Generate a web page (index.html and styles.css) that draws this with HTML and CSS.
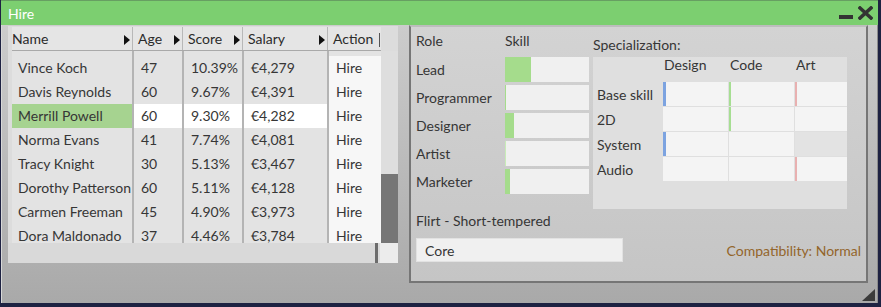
FILE: index.html
```html
<!DOCTYPE html>
<html>
<head>
  <meta charset="UTF-8">
  <title>Hire</title>
  <link rel="stylesheet" href="styles.css">
</head>
<body>
  <div class="window">
    <header class="titlebar">
      <span class="title">Hire</span>
      <div class="win-btns">
        <span class="btn-min"></span>
        <svg class="btn-close" width="15" height="14" viewBox="0 0 15 14">
          <path d="M2 2 L13 12 M13 2 L2 12" stroke="#333" stroke-width="3.6" stroke-linecap="square"/>
        </svg>
      </div>
    </header>

    <div class="win-body">
      <!-- Candidate list -->
      <div class="list">
        <div class="list-main">
          <div class="table">
            <div class="thead">
              <div class="th th-name">Name<span class="sort"></span></div>
              <div class="th">Age<span class="sort"></span></div>
              <div class="th">Score<span class="sort"></span></div>
              <div class="th">Salary<span class="sort"></span></div>
              <div class="th th-last">Action<span class="pipe"></span></div>
            </div>
            <div class="tbody">
              <div class="row spacer">
                <div class="cell"></div><div class="cell"></div><div class="cell"></div><div class="cell"></div><div class="cell act"></div>
              </div>
              <div class="row">
                <div class="cell name">Vince Koch</div><div class="cell">47</div><div class="cell">10.39%</div><div class="cell">€4,279</div><div class="cell act">Hire</div>
              </div>
              <div class="row">
                <div class="cell name">Davis Reynolds</div><div class="cell">60</div><div class="cell">9.67%</div><div class="cell">€4,391</div><div class="cell act">Hire</div>
              </div>
              <div class="row sel">
                <div class="cell name">Merrill Powell</div><div class="cell">60</div><div class="cell">9.30%</div><div class="cell">€4,282</div><div class="cell act">Hire</div>
              </div>
              <div class="row">
                <div class="cell name">Norma Evans</div><div class="cell">41</div><div class="cell">7.74%</div><div class="cell">€4,081</div><div class="cell act">Hire</div>
              </div>
              <div class="row">
                <div class="cell name">Tracy Knight</div><div class="cell">30</div><div class="cell">5.13%</div><div class="cell">€3,467</div><div class="cell act">Hire</div>
              </div>
              <div class="row">
                <div class="cell name">Dorothy Patterson</div><div class="cell">60</div><div class="cell">5.11%</div><div class="cell">€4,128</div><div class="cell act">Hire</div>
              </div>
              <div class="row">
                <div class="cell name">Carmen Freeman</div><div class="cell">45</div><div class="cell">4.90%</div><div class="cell">€3,973</div><div class="cell act">Hire</div>
              </div>
              <div class="row">
                <div class="cell name">Dora Maldonado</div><div class="cell">37</div><div class="cell">4.46%</div><div class="cell">€3,784</div><div class="cell act">Hire</div>
              </div>
            </div>
          </div>
          <div class="vscroll"><div class="vthumb"></div></div>
        </div>
        <div class="list-foot">
          <div class="hscroll"></div>
          <div class="hthumb"></div>
          <div class="corner"></div>
        </div>
      </div>

      <!-- Candidate details -->
      <div class="detail">
        <div class="detail-top">
          <div class="skills">
            <div class="lbl">Role</div>
            <div class="lbl">Skill</div>

            <div class="lbl">Lead</div>
            <div class="bar"><div class="fill" style="width: 26px"></div></div>
            <div class="lbl">Programmer</div>
            <div class="bar"><div class="fill" style="width: 1px"></div></div>
            <div class="lbl">Designer</div>
            <div class="bar"><div class="fill" style="width: 9px"></div></div>
            <div class="lbl">Artist</div>
            <div class="bar"><div class="fill faint" style="width: 1px"></div></div>
            <div class="lbl">Marketer</div>
            <div class="bar"><div class="fill" style="width: 5px"></div></div>
          </div>

          <div class="spec">
            <div class="spec-title">Specialization:</div>
            <div class="spec-box">
              <div></div>
              <div class="spec-col">Design</div>
              <div class="spec-col">Code</div>
              <div class="spec-col">Art</div>

              <div class="spec-row">Base skill</div>
              <div class="sc blue"></div>
              <div class="sc green"></div>
              <div class="sc red"></div>

              <div class="spec-row">2D</div>
              <div class="sc"></div>
              <div class="sc green"></div>
              <div class="sc"></div>

              <div class="spec-row">System</div>
              <div class="sc blue"></div>
              <div class="sc"></div>
              <div class="sc off"></div>

              <div class="spec-row">Audio</div>
              <div class="sc"></div>
              <div class="sc"></div>
              <div class="sc red"></div>
            </div>
          </div>
        </div>

        <div class="trait">Flirt - Short-tempered</div>

        <div class="detail-bottom">
          <div class="field">Core</div>
          <div class="compat">Compatibility: Normal</div>
        </div>
      </div>
    </div>

    <div class="grip"></div>
  </div>
</body>
</html>
```

FILE: styles.css
```css
* {
  margin: 0;
  padding: 0;
  box-sizing: border-box;
}

body {
  background-color: #1e2242;
  font-family: Lato, "Open Sans", sans-serif;
  font-size: 14px;
  color: #363636;
  overflow: hidden;
}

/* Window frame */
.window {
  position: relative;
  width: 877px;
  height: 303px;
  margin-left: 1px;
  background: linear-gradient(#cfcfcf, #a9a9a9);
}

.titlebar {
  height: 25px;
  background-color: #7ccf70;
  border-top: 1px solid #679f62;
  display: flex;
  justify-content: space-between;
  align-items: center;
  padding: 0 5px 0 7px;
  color: #ffffff;
  font-size: 14px;
}

.win-btns {
  display: flex;
  align-items: center;
  gap: 5px;
}

.btn-min {
  width: 14px;
  height: 4px;
  margin-top: 7px;
  background-color: #333333;
}

.btn-close {
  display: block;
}

.win-body {
  display: flex;
  align-items: flex-start;
  gap: 11px;
  height: 278px;
  padding: 0 9px 0 6px;
  border-left: 1px solid #d8d8d8;
  border-right: 1px solid #8c8c8c;
}

/* List panel */
.list {
  width: 390px;
  height: 237px;
  margin-top: 1px;
  background-color: #dcdcdc;
  display: flex;
  flex-direction: column;
}

.list-main {
  display: flex;
  height: 217px;
  padding: 1px 0 0 4px;
}

.table {
  width: 369px;
}

.thead {
  display: grid;
  grid-template-columns: 121px 50px 60px 85px 53px;
  height: 24px;
  background-color: #e5e5e5;
  border-bottom: 1px solid #a9a9a9;
  color: #2b2b2b;
}

.th {
  display: flex;
  justify-content: space-between;
  align-items: center;
  padding: 0 2px 1px 5px;
  border-right: 1px solid #b8b8b8;
}

.th-name {
  padding-left: 0;
}

.th-last {
  border-right: none;
  padding-right: 1px;
}

.sort {
  width: 0;
  height: 0;
  border-left: 6px solid #111111;
  border-top: 5px solid transparent;
  border-bottom: 5px solid transparent;
  margin-top: 4px;
}

.pipe {
  width: 1px;
  height: 14px;
  margin-top: 4px;
  background-color: #555555;
}

.tbody {
  height: 192px;
  overflow: hidden;
}

.row {
  display: grid;
  grid-template-columns: 120px 48px 58px 83px 52px;
  column-gap: 2px;
  height: 24px;
  background-color: #b4b4b4;
}

.row.spacer {
  height: 5px;
}

.cell {
  display: flex;
  align-items: center;
  padding: 0 0 2px 7px;
  background-color: #e3e3e3;
  white-space: nowrap;
  overflow: hidden;
}

.cell.name {
  padding-left: 6px;
}

.cell.act {
  background-color: #f7f7f7;
}

.spacer .cell.act {
  background-color: #e3e3e3;
}

.row.sel .cell {
  background-color: #ffffff;
}

.row.sel .cell.name {
  background-color: #a6d390;
}

.row.sel .cell.act {
  background-color: #f7f7f7;
}

.vscroll {
  width: 17px;
  height: 192px;
  margin-top: 24px;
  background-color: #dedede;
  display: flex;
  flex-direction: column;
  justify-content: flex-end;
}

.vthumb {
  height: 69px;
  background-color: #767676;
}

.list-foot {
  display: flex;
  height: 20px;
}

.hscroll {
  flex-grow: 1;
  background-color: #d9d9d9;
}

.hthumb {
  width: 3px;
  margin-right: 2px;
  background-color: #6c6c6c;
}

.corner {
  width: 18px;
  background-color: #ececec;
}

/* Detail panel */
.detail {
  width: 459px;
  height: 258px;
  border: 2px solid #767676;
  border-top-color: #bdbdbd;
  background: linear-gradient(#d3d3d3, #c5c5c5);
  padding: 0 5px;
}

.detail-top {
  display: flex;
  gap: 4px;
}

.skills {
  display: grid;
  grid-template-columns: 89px 84px;
  grid-template-rows: 27px repeat(5, 25px);
  row-gap: 3px;
}

.lbl {
  display: flex;
  align-items: center;
  padding-bottom: 1px;
}

.bar {
  background-color: #f0f0f0;
}

.fill {
  height: 100%;
  background-color: #a5dc8c;
}

.fill.faint {
  background-color: #c8ecb8;
}

.spec-title {
  height: 30px;
  padding-top: 9px;
  line-height: 17px;
}

.spec-box {
  display: grid;
  grid-template-columns: 69px 65px 65px 52px;
  grid-template-rows: 24px repeat(4, 24px);
  gap: 1px;
  width: 254px;
  height: 152px;
  background-color: #dfdfdf;
}

.spec-col {
  padding-left: 1px;
  line-height: 15px;
}

.spec-row {
  display: flex;
  align-items: center;
  padding-left: 4px;
}

.sc {
  background-color: #f4f4f4;
}

.sc.blue {
  border-left: 3px solid #7ca3e0;
}

.sc.green {
  border-left: 2px solid #a6de92;
}

.sc.red {
  border-left: 2px solid #e8b0b0;
}

.sc.off {
  background-color: #e3e3e3;
}

.trait {
  margin-top: 3px;
  line-height: 17px;
}

.detail-bottom {
  display: flex;
  justify-content: space-between;
  align-items: center;
  margin-top: 9px;
}

.field {
  width: 207px;
  height: 24px;
  padding-left: 8px;
  display: flex;
  align-items: center;
  background-color: #f0f0f0;
  border: 1px solid #e2e2e2;
}

.compat {
  color: #93652b;
}

.grip {
  position: absolute;
  right: 3px;
  bottom: 2px;
  width: 0;
  height: 0;
  border-left: 13px solid transparent;
  border-bottom: 12px solid #3b3b3b;
}
```
